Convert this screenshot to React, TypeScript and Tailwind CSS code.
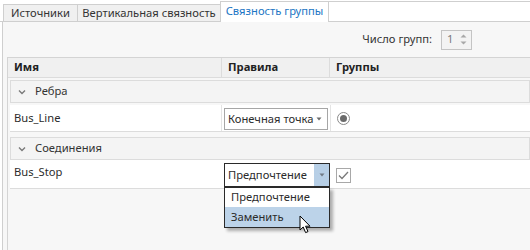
import React from "react";

const font = { fontFamily: '"Noto Sans", "Open Sans", sans-serif' };

function Chevron() {
  return (
    <svg width="8" height="6" viewBox="0 0 8 6" className="mr-[9px]">
      <path d="M1 1.5 L4 4.5 L7 1.5" fill="none" stroke="#7a7a7a" strokeWidth="1.4" />
    </svg>
  );
}

function SmallArrow({ color = "#6b6b6b" }: { color?: string }) {
  return (
    <svg width="6" height="4" viewBox="0 0 6 4">
      <path d="M0.5 0.5 L5.5 0.5 L3 3.5 Z" fill={color} />
    </svg>
  );
}

function Cursor() {
  return (
    <svg width="14" height="20" viewBox="0 0 14 20">
      <path
        d="M1 1 L1 15 L4.2 12 L6.6 17.6 L9 16.6 L6.6 11.2 L11 11.2 Z"
        fill="#ffffff"
        stroke="#000000"
        strokeWidth="1"
        strokeLinejoin="miter"
      />
    </svg>
  );
}

export default function App() {
  return (
    <div
      className="w-[530px] h-[250px] bg-white overflow-hidden relative flex flex-col text-[11.2px] text-[#2b2b2b] whitespace-nowrap"
      style={font}
    >
      {/* tab strip */}
      <div className="flex items-end h-[22px] shrink-0">
        <div className="w-[3px] h-full border-b border-[#cfcfcf]" />
        <div className="w-[74px] h-[18px] flex items-center justify-center bg-[#f0f0f0] border-t border-l border-b border-[#cfcfcf] text-[#333]">
          Источники
        </div>
        <div className="w-[143px] h-[18px] flex items-center justify-center bg-[#f0f0f0] border-t border-l border-b border-[#cfcfcf] text-[#333]">
          Вертикальная связность
        </div>
        <div className="w-[109px] h-[21px] flex items-center justify-center bg-white border-t border-l border-r border-[#cfcfcf] text-[#1b76c4] pb-[1px]">
          Связность группы
        </div>
        <div className="flex-1 h-[21px] bg-white border-t border-b border-[#cfcfcf]" />
      </div>

      {/* content */}
      <div className="flex-1 ml-[2px] border-l border-[#cfcfcf] bg-[#f7f7f7] flex flex-col relative">
        <div className="h-[35px] flex items-center justify-end pr-[58px] shrink-0">
          <span className="text-[#333] mr-[9px]">Число групп:</span>
          <div className="w-[31px] h-[20px] border border-[#c4c4c4] bg-[#f3f3f3] flex items-center justify-between pl-[5px] pr-[4px]">
            <span className="text-[#7a7a7a]">1</span>
            <div className="flex flex-col gap-[3px]">
              <svg width="7" height="4" viewBox="0 0 7 4">
                <path d="M0.5 3.5 L3.5 0.5 L6.5 3.5 Z" fill="#a8a8a8" />
              </svg>
              <svg width="7" height="4" viewBox="0 0 7 4">
                <path d="M0.5 0.5 L3.5 3.5 L6.5 0.5 Z" fill="#a8a8a8" />
              </svg>
            </div>
          </div>
        </div>

        {/* table */}
        <div className="ml-[4px] flex-1 border-l border-t border-[#d4d4d4] flex flex-col">
          {/* header */}
          <div className="h-[20px] flex bg-[#f0f0f0] border-b border-[#dcdcdc] font-bold text-[#222]">
            <div className="w-[214px] pl-[6px] flex items-center border-r border-[#dcdcdc]">Имя</div>
            <div className="w-[108px] pl-[6px] flex items-center border-r border-[#dcdcdc]">Правила</div>
            <div className="flex-1 pl-[6px] flex items-center">Группы</div>
          </div>

          {/* group Ребра */}
          <div className="mt-[2px] ml-[2px] h-[23px] border border-[#dcdcdc] bg-[#f4f4f4] flex items-center pl-[7px] text-[#333]">
            <Chevron />
            Ребра
          </div>

          {/* Bus_Line row */}
          <div className="mt-[2px] ml-[2px] h-[27px] flex bg-white border-b border-[#dcdcdc]">
            <div className="w-[212px] pl-[4px] flex items-center border-r border-[#e4e4e4]">Bus_Line</div>
            <div className="w-[108px] pl-[2px] pt-[3px]">
              <div className="w-[104px] h-[22px] border border-[#a6a6a6] bg-white flex items-center justify-between pl-[3px] pr-[5px]">
                <span>Конечная точка</span>
                <SmallArrow />
              </div>
            </div>
            <div className="flex-1 pl-[6px] pt-[7px] border-l border-[#e4e4e4]">
              <div className="w-[13px] h-[13px] rounded-full border border-[#8a8a8a] flex items-center justify-center bg-white">
                <div className="w-[7px] h-[7px] rounded-full bg-[#6a6a6a]" />
              </div>
            </div>
          </div>

          {/* group Соединения */}
          <div className="mt-[5px] ml-[2px] h-[23px] border border-[#dcdcdc] bg-[#f4f4f4] flex items-center pl-[7px] text-[#333]">
            <Chevron />
            Соединения
          </div>

          {/* Bus_Stop row */}
          <div className="ml-[2px] h-[29px] flex bg-white border-b border-[#dcdcdc]">
            <div className="w-[212px] pl-[4px] pt-[4px]">Bus_Stop</div>
            <div className="w-[108px] pl-[2px] pt-[3px] relative">
              <div className="w-[106px] h-[24px] border border-[#2a2a2a] bg-white flex items-stretch">
                <span className="flex-1 flex items-center pl-[3px]">Предпочтение</span>
                <div className="w-[15px] bg-[#b7cfe6] flex items-center justify-center">
                  <SmallArrow color="#707a85" />
                </div>
              </div>
              {/* popup list */}
              <div className="absolute left-[2px] top-[27px] w-[106px] border border-[#2a2a2a] bg-white shadow-[3px_3px_3px_rgba(0,0,0,0.3)] z-10 flex flex-col">
                <div className="h-[19px] flex items-center pl-[6px]">Предпочтение</div>
                <div className="h-[20px] flex items-center pl-[6px] bg-[#bcd3e9]">Заменить</div>
              </div>
              <div className="absolute left-[77px] top-[55px] z-20">
                <Cursor />
              </div>
            </div>
            <div className="flex-1 pl-[6px] pt-[8px]">
              <div className="w-[15px] h-[15px] border border-[#a8a8a8] bg-white flex items-center justify-center">
                <svg width="11" height="9" viewBox="0 0 11 9">
                  <path d="M1 4.5 L4 7.5 L10 1" fill="none" stroke="#7a7a7a" strokeWidth="1.3" />
                </svg>
              </div>
            </div>
          </div>
        </div>
      </div>
    </div>
  );
}
